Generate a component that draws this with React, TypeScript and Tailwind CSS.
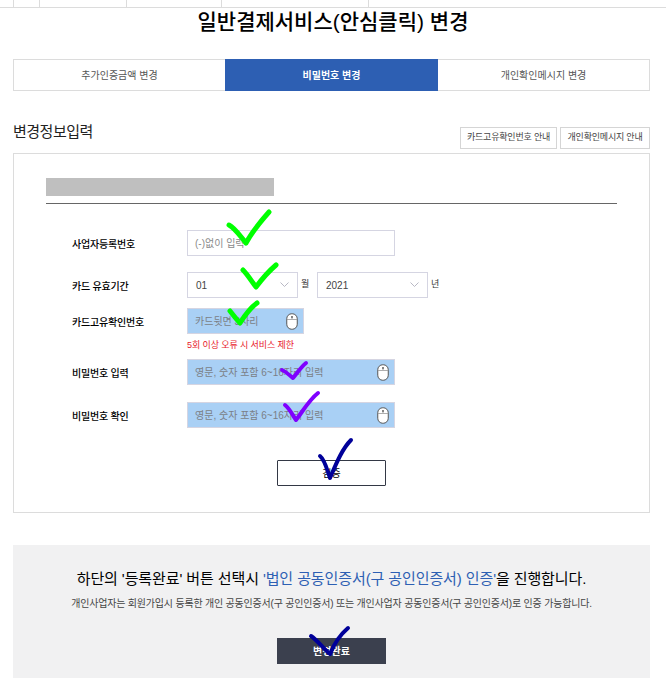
const font = '[font-family:"Liberation_Sans","Noto_Sans_CJK_KR",sans-serif]'

const marks = [
  { color: '#00ff00', width: 5, d: 'M229 225 C235 228 240 236 246 243 C252 232 261 221 269 212' },
  { color: '#00ff00', width: 5, d: 'M243 270 C248 275 252 282 256 287 C262 279 269 271 276 265' },
  { color: '#00ff00', width: 5, d: 'M230 311 C234 316 237 320 240 323 C245 315 250 308 257 303' },
  { color: '#7f00ff', width: 4, d: 'M282 370 C287 372 290 376 293 378 C298 372 301 367 306 363' },
  { color: '#7f00ff', width: 4, d: 'M285 405 C290 409 293 416 296 420 C303 411 309 400 318 393' },
  { color: '#000099', width: 4, d: 'M320 456 C325 460 327 470 330 478 C336 464 342 449 351 440' },
  { color: '#000099', width: 4, d: 'M311 636 C317 640 325 650 330 654 C334 644 341 634 348 628' },
]

function MouseIcon() {
  return (
    <svg width="12" height="17" viewBox="0 0 12 17" className="shrink-0">
      <rect x="0.75" y="0.75" width="10.5" height="15.5" rx="5" fill="#fff" stroke="#555" strokeWidth="1" />
      <line x1="0.75" y1="6.5" x2="11.25" y2="6.5" stroke="#999" strokeWidth="0.8" />
      <rect x="5.2" y="3" width="1.6" height="2.4" fill="#666" />
    </svg>
  )
}

function Chevron() {
  return (
    <svg width="9" height="6" viewBox="0 0 9 6" className="shrink-0">
      <path d="M0.5 0.5 L4.5 4.5 L8.5 0.5" fill="none" stroke="#b8b8c4" strokeWidth="1" />
    </svg>
  )
}

function Row({ label, className, children }: { label: string; className: string; children: React.ReactNode }) {
  return (
    <div className={`flex items-center ${className}`}>
      <div className="w-[141px] pt-[2px] pl-[26px] text-[10px] font-medium text-black tracking-[-0.2px]">{label}</div>
      {children}
    </div>
  )
}

function SecureInput({ text, width }: { text: string; width: string }) {
  return (
    <div className={`flex h-[26px] items-center justify-between border border-[#d5d5e2] bg-[#a9d0f5] pl-[7px] pr-[5px] ${width}`}>
      <span className="text-[10px] text-[#7b7f86]">{text}</span>
      <MouseIcon />
    </div>
  )
}

function Select({ value }: { value: string }) {
  return (
    <div className="flex h-[26px] w-[111px] items-center justify-between border border-[#d5d5e2] bg-white pl-[8px] pr-[8px]">
      <span className="text-[10px] text-[#444]">{value}</span>
      <Chevron />
    </div>
  )
}

export default function App() {
  return (
    <div className={`relative h-[678px] w-[666px] overflow-hidden bg-white ${font}`}>
      {/* 상단 잘린 표 */}
      <div className="flex h-[8px] border-b border-[#dcdcdc] pl-[13px]">
        <div className="w-[26px] border-l border-[#dcdcdc]" />
        <div className="w-[87px] border-l border-[#dcdcdc]" />
        <div className="w-[95px] border-l border-[#dcdcdc]" />
        <div className="w-[147px] border-l border-[#dcdcdc]" />
        <div className="flex-1 border-l border-[#dcdcdc]" />
      </div>

      <h1 className="h-[37px] text-center text-[21px] leading-[27px] font-medium text-black">
        일반결제서비스(안심클릭) 변경
      </h1>

      <div className="mx-[13px] mt-[14px] flex h-[32px] w-[637px] border border-[#dcdcdc] text-[10px]">
        <div className="flex w-[211px] items-center justify-center text-[#555]">추가인증금액 변경</div>
        <div className="-my-px flex w-[213px] items-center justify-center bg-[#2d5fb3] font-bold text-white">
          비밀번호 변경
        </div>
        <div className="flex flex-1 items-center justify-center text-[#555]">개인확인메시지 변경</div>
      </div>

      <div className="mx-[13px] mt-[28px] flex h-[26px] w-[637px] items-start justify-between">
        <div className="mt-[1px] text-[15px] leading-[24px] text-[#222] tracking-[-0.5px]">변경정보입력</div>
        <div className="mt-[8px] flex gap-[3px]">
          <div className="flex h-[22px] w-[97px] items-center justify-center border border-[#d5d5d5] text-[9px] text-[#444] tracking-[-0.2px]">
            카드고유확인번호 안내
          </div>
          <div className="flex h-[22px] w-[90px] items-center justify-center border border-[#d5d5d5] text-[9px] text-[#444] tracking-[-0.2px]">
            개인확인메시지 안내
          </div>
        </div>
      </div>

      <div className="mx-[13px] mt-[8px] h-[360px] w-[637px] border border-[#dcdcdc] pt-[24px] pl-[32px]">
        <div className="h-[18px] w-[228px] bg-[#bfbfbf]" />
        <div className="mt-[7px] w-[571px] border-t border-[#666]" />

        <Row label="사업자등록번호" className="mt-[26px]">
          <div className="flex h-[26px] w-[208px] items-center border border-[#d5d5e2] pl-[7px] text-[10px] text-[#8a8a8a]">
            (-)없이 입력
          </div>
        </Row>

        <Row label="카드 유효기간" className="mt-[16px]">
          <Select value="01" />
          <span className="w-[19px] pl-[3px] text-[9px] text-[#333]">월</span>
          <Select value="2021" />
          <span className="pl-[3px] text-[9px] text-[#333]">년</span>
        </Row>

        <Row label="카드고유확인번호" className="mt-[10px]">
          <SecureInput text="카드뒷면 3자리" width="w-[117px]" />
        </Row>
        <div className="mt-[5px] pl-[141px] text-[9px] leading-[13px] text-[#e8202a] tracking-[-0.1px]">5회 이상 오류 시 서비스 제한</div>

        <Row label="비밀번호 입력" className="mt-[7px]">
          <SecureInput text="영문, 숫자 포함 6~16자리 입력" width="w-[208px]" />
        </Row>
        <Row label="비밀번호 확인" className="mt-[17px]">
          <SecureInput text="영문, 숫자 포함 6~16자리 입력" width="w-[208px]" />
        </Row>

        <div className="mt-[32px] ml-[231px] flex h-[26px] w-[109px] items-center justify-center rounded-[1px] border border-[#333845] text-[10px] text-black">
          검증
        </div>
      </div>

      <div className="mx-[13px] mt-[32px] h-[133px] w-[637px] bg-[#f1f1f2] pt-[22px] text-center">
        <div className="text-[15px] leading-[24px] text-black tracking-[-0.1px]">
          하단의 '등록완료' 버튼 선택시 <span className="text-[#2d5fb3]">'법인 공동인증서(구 공인인증서) 인증'</span>을 진행합니다.
        </div>
        <div className="mt-[6px] text-[10px] leading-[14px] text-[#444] tracking-[-0.2px]">
          개인사업자는 회원가입시 등록한 개인 공동인증서(구 공인인증서) 또는 개인사업자 공동인증서(구 공인인증서)로 인증 가능합니다.
        </div>
        <div className="mx-auto mt-[27px] flex h-[26px] w-[109px] items-center justify-center bg-[#3b404e] text-[10px] font-bold text-white">
          변경완료
        </div>
      </div>

      {/* 손으로 그린 체크 표시 */}
      <svg className="pointer-events-none absolute top-0 left-0" width="666" height="678" viewBox="0 0 666 678">
        {marks.map((m, i) => (
          <path key={i} d={m.d} fill="none" stroke={m.color} strokeWidth={m.width} strokeLinecap="round" strokeLinejoin="round" />
        ))}
      </svg>
    </div>
  )
}
